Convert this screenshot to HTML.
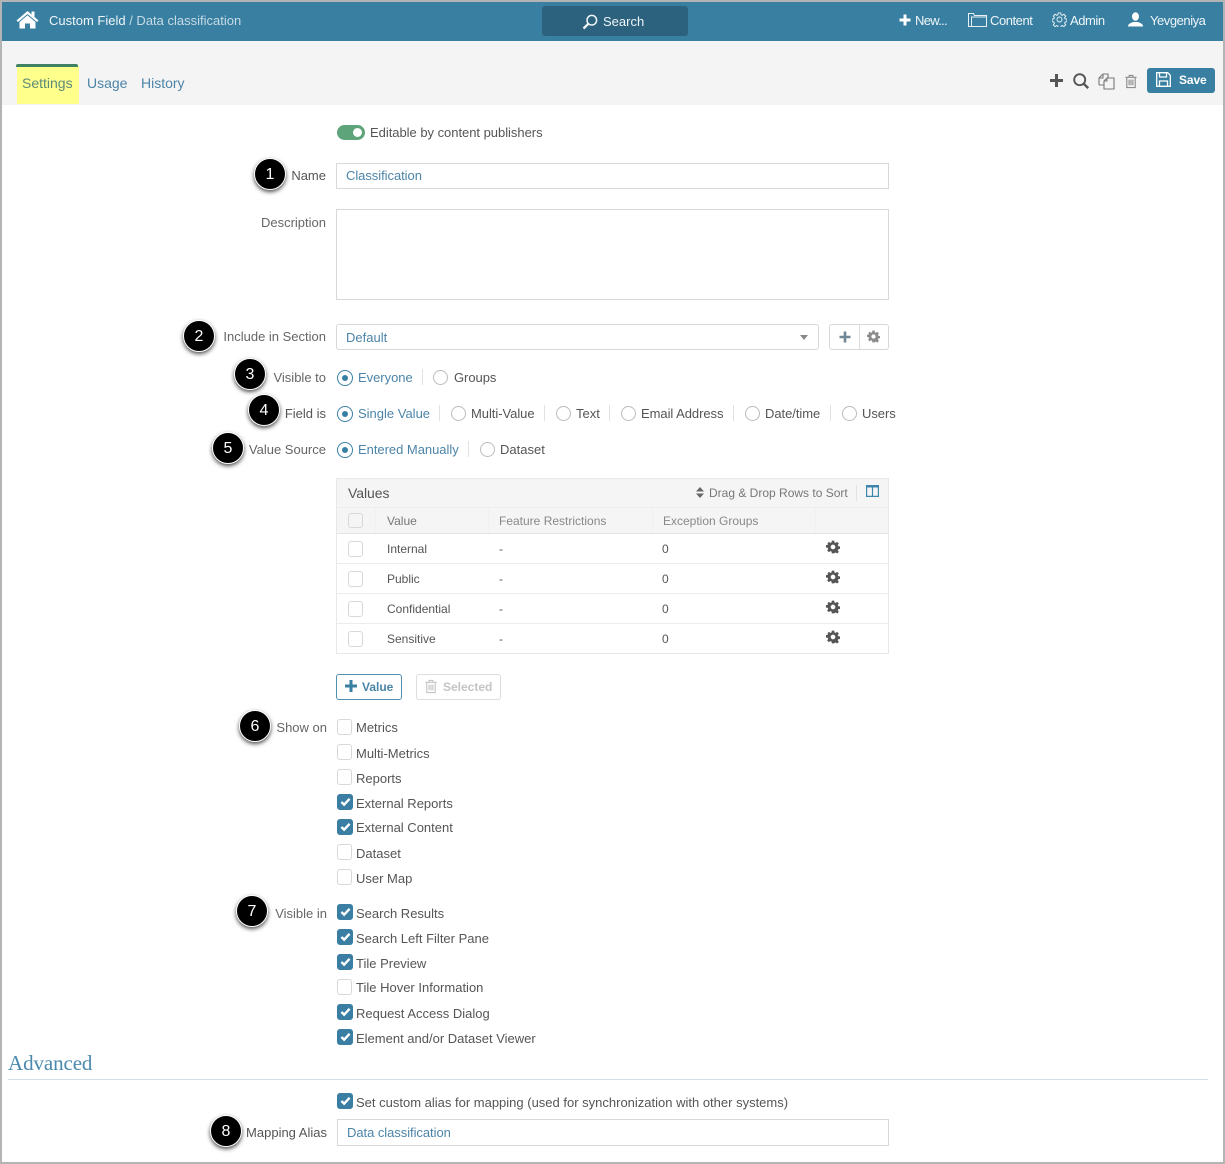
<!DOCTYPE html>
<html><head><meta charset="utf-8"><title>Custom Field</title>
<style>
*{box-sizing:border-box}
html,body{margin:0;padding:0;background:#fff}
#p{position:relative;width:1225px;height:1164px;overflow:hidden;background:#fff;font-family:"Liberation Sans",sans-serif;font-size:13px;color:#555}
.t{position:absolute;white-space:nowrap;line-height:16px;font-size:13px}
.r{text-align:right;right:898px}
.u{right:899px}
.b{color:#4c84a8}
.d{color:#555}
.g{color:#8a8a8a}
.bx{position:absolute;border:1px solid #d8d8d8;background:#fff}
.rad{position:absolute;width:15px;height:15px;border:1px solid #bbb;border-radius:50%;background:#fff}
.rad.on{width:16px;height:16px;border:1.5px solid #3a7fa3}
.rad.on:after{content:"";position:absolute;left:3.5px;top:3.5px;width:6px;height:6px;border-radius:50%;background:#3a7fa3}
.sep{position:absolute;width:1px;height:16px;background:#e2e2e2}
.cb{position:absolute;width:15px;height:16px;border:1px solid #d8d8d8;border-radius:3px;background:#fff}
.cb.on{width:16px;background:#3a7fa3;border-color:#3a7fa3}
.cb svg{position:absolute;left:1.500px;top:2px}
.n{position:absolute;width:32px;height:32px;border-radius:50%;background:#000;border:1.5px solid #fff;box-shadow:0 2px 4px rgba(0,0,0,.7);color:#fff;text-align:center;line-height:31px;font-size:16px}
.l{position:absolute;background:#ececec}
.f{background:#f0f0f0}
svg{position:absolute;display:block}
</style></head><body><div id="p">
<svg width="0" height="0"><defs>
<symbol id="gear" viewBox="0 0 24 24"><path fill-rule="evenodd" d="M10 1h4l.6 3.2 1.9.8L19.200 3.200l2.800 2.800-1.800 2.700.8 1.900 3 .6v4l-3 .6-.8 1.900 1.800 2.700-2.800 2.800-2.700-1.800-1.900.8L14 23h-4l-.6-3.200-1.900-.8-2.700 1.800L2 18l1.800-2.700-.8-1.900-3-.6v-4l3-.6.8-1.900L2 6l2.800-2.800L7.500 5l1.900-.8zM12 8a4 4 0 1 0 0 8 4 4 0 0 0 0-8z"/></symbol>
<symbol id="chk" viewBox="0 0 12 11"><path d="M1.500 5.500l3 3 6-6.500" fill="none" stroke="#fff" stroke-width="2.600"/></symbol>
<symbol id="trash" viewBox="0 0 14 16"><path d="M1 3.500h12M5 3V1.500h4V3M2.500 3.500v11h9v-11M5 6v6M7 6v6M9 6v6" fill="none" stroke="currentColor" stroke-width="1.200"/></symbol>
</defs></svg>

<!-- header -->
<div style="position:absolute;left:2px;top:2px;width:1221px;height:39px;background:#387fa1"></div>
<svg style="left:16px;top:10px" width="23" height="19" viewBox="0 0 23 19"><path d="M11.500 1L0.500 10.500l1.500 1.500 9.500-8 9.500 8 1.500-1.500-4-3.500V1.500h-3v3z" fill="#fff"/><path d="M3.500 12l8-6.700 8 6.700v6.500h-5.500v-5h-5v5H3.500z" fill="#fff"/></svg>
<div class="t" style="left:49px;top:13px;color:#f1f6f9">Custom Field <span style="color:#c6dbe6">/ Data classification</span></div>
<div style="position:absolute;left:542px;top:6px;width:146px;height:30px;background:#2c627d;border-radius:3px"></div>
<svg style="left:582px;top:14px" width="16" height="16" viewBox="0 0 16 16"><circle cx="9.800" cy="6.200" r="4.800" fill="none" stroke="#eef5f8" stroke-width="1.500"/><path d="M6.300 9.800L1.500 14.500" stroke="#eef5f8" stroke-width="2.300"/></svg>
<div class="t" style="left:603px;top:14px;color:#eef5f8">Search</div>
<svg style="left:899px;top:14px" width="12" height="12" viewBox="0 0 12 12"><path d="M6 0.500v11M0.500 6h11" stroke="#fff" stroke-width="3"/></svg>
<div class="t" style="left:915px;top:13px;color:#eef5f8;letter-spacing:-.7px">New...</div>
<svg style="left:968px;top:12px" width="19" height="16" viewBox="0 0 19 16"><path d="M.5 14.500V1.500h5l1 2h12v11zM3.500 14.500V5h15" fill="none" stroke="#e6f0f5" stroke-width="1"/></svg>
<div class="t" style="left:990px;top:13px;color:#eef5f8;letter-spacing:-.45px">Content</div>
<svg style="left:1052px;top:12px" width="15" height="15" viewBox="0 0 24 24"><path d="M10 1.500h4l.6 3 2 .8 2.500-1.700 2.800 2.800-1.700 2.500.8 2 3 .6v4l-3 .6-.8 2 1.700 2.500-2.800 2.800-2.500-1.700-2 .8-.6 3h-4l-.6-3-2-.8-2.500 1.700-2.800-2.800 1.700-2.500-.8-2-3-.6v-4l3-.6.8-2L2.100 6.400l2.800-2.800 2.500 1.700 2-.8z" fill="none" stroke="#eef5f8" stroke-width="1.500"/><circle cx="12" cy="12" r="4" fill="none" stroke="#eef5f8" stroke-width="1.500"/></svg>
<div class="t" style="left:1070px;top:13px;color:#eef5f8;letter-spacing:-.45px">Admin</div>
<svg style="left:1128px;top:12px" width="15" height="15" viewBox="0 0 15 15"><ellipse cx="7.500" cy="4.500" rx="3.500" ry="4.300" fill="#fff"/><path d="M0 14.500c0-3 3-3.500 5-4.500h5c2 1 5 1.500 5 4.500z" fill="#fff"/></svg>
<div class="t" style="left:1150px;top:13px;color:#eef5f8;letter-spacing:-.45px">Yevgeniya</div>

<!-- tabs band -->
<div style="position:absolute;left:2px;top:41px;width:1221px;height:64px;background:#f4f4f4"></div>
<div style="position:absolute;left:17px;top:66px;width:62px;height:38px;background:#ffff8c"></div>
<div style="position:absolute;left:16px;top:64px;width:62px;height:3px;background:#3d8263;border-radius:2px 2px 0 0"></div>
<div class="t" style="left:22px;top:75px;font-size:14px;color:#5d8a78">Settings</div>
<div class="t" style="left:87px;top:75px;font-size:14px;color:#4c84a8">Usage</div>
<div class="t" style="left:141px;top:75px;font-size:14px;color:#4c84a8">History</div>
<svg style="left:1050px;top:74px" width="13" height="13" viewBox="0 0 13 13"><path d="M6.500 0v13M0 6.500h13" stroke="#555" stroke-width="3"/></svg>
<svg style="left:1073px;top:73px" width="16" height="16" viewBox="0 0 16 16"><circle cx="6.700" cy="6.700" r="5.500" fill="none" stroke="#555" stroke-width="1.900"/><path d="M10.700 10.700l4.500 4.500" stroke="#555" stroke-width="2.400"/></svg>
<svg style="left:1098px;top:73px" width="17" height="17" viewBox="0 0 17 17"><path d="M1 12V5l4-4h5v4M5 1v4H1M1 12h5" fill="none" stroke="#777" stroke-width="1.100"/><path d="M6 16V8l3-3h7v11zM9 5v3H6" fill="none" stroke="#777" stroke-width="1.100"/></svg>
<svg style="left:1124px;top:74px;color:#8c8c8c" width="14" height="15"><use href="#trash"/></svg>
<div style="position:absolute;left:1147px;top:68px;width:68px;height:25px;background:#387fa1;border-radius:3px"></div>
<svg style="left:1156px;top:72px" width="15" height="15" viewBox="0 0 15 15"><path d="M.7.700h11l2.600 2.600v11H.7z" fill="none" stroke="#fff" stroke-width="1.300"/><path d="M3.500 1v4h7V1M3.500 14V9h8v5" fill="none" stroke="#fff" stroke-width="1.300"/></svg>
<div class="t" style="left:1179px;top:72px;color:#fff;font-weight:bold;font-size:12px;letter-spacing:-.1px">Save</div>

<!-- toggle -->
<div style="position:absolute;left:337px;top:125px;width:28px;height:15px;background:#5da47a;border-radius:8px"></div>
<div style="position:absolute;left:353px;top:128px;width:9px;height:9px;background:#fff;border-radius:50%"></div>
<div class="t" style="left:370px;top:125px;letter-spacing:-.03px">Editable by content publishers</div>

<!-- name -->
<div class="t r u" style="top:168px">Name</div>
<div class="bx" style="left:336px;top:163px;width:553px;height:26px"></div>
<div class="t b" style="left:346px;top:168px;letter-spacing:-.05px">Classification</div>
<div class="t r u" style="top:215px;color:#666">Description</div>
<div class="bx" style="left:336px;top:209px;width:553px;height:91px"></div>

<!-- section -->
<div class="t r u" style="top:329px;color:#666">Include in Section</div>
<div class="bx" style="left:336px;top:324px;width:483px;height:26px;border-radius:3px"></div>
<div class="t b" style="left:346px;top:330px">Default</div>
<div style="position:absolute;left:800px;top:335px;width:0;height:0;border-left:4.500px solid transparent;border-right:4.500px solid transparent;border-top:5px solid #888"></div>
<div class="bx" style="left:829px;top:324px;width:60px;height:26px;border-radius:3px"></div>
<div class="l" style="left:859px;top:325px;width:1px;height:24px;background:#ddd"></div>
<svg style="left:839px;top:331px" width="12" height="12" viewBox="0 0 12 12"><path d="M6 .5v11M.5 6h11" stroke="#6f8796" stroke-width="2.600"/></svg>
<svg style="left:867px;top:330px;fill:#8b8b8b" width="13" height="13"><use href="#gear"/></svg>

<!-- visible to -->
<div class="t r u" style="top:370px;color:#666">Visible to</div>
<div class="rad on" style="left:337px;top:370px"></div>
<div class="t b" style="left:358px;top:370px;letter-spacing:-.03px">Everyone</div>
<div class="sep" style="left:422px;top:369px"></div>
<div class="rad" style="left:433px;top:370px"></div>
<div class="t" style="left:454px;top:370px;letter-spacing:-.05px">Groups</div>

<!-- field is -->
<div class="t r u" style="top:406px;">Field is</div>
<div class="rad on" style="left:337px;top:406px"></div>
<div class="t b" style="left:358px;top:406px">Single Value</div>
<div class="sep" style="left:439px;top:405px"></div>
<div class="rad" style="left:451px;top:406px"></div>
<div class="t" style="left:471px;top:406px;letter-spacing:-.05px">Multi-Value</div>
<div class="sep" style="left:544px;top:405px"></div>
<div class="rad" style="left:556px;top:406px"></div>
<div class="t" style="left:576px;top:406px">Text</div>
<div class="sep" style="left:609px;top:405px"></div>
<div class="rad" style="left:621px;top:406px"></div>
<div class="t" style="left:641px;top:406px;letter-spacing:-.05px">Email Address</div>
<div class="sep" style="left:733px;top:405px"></div>
<div class="rad" style="left:745px;top:406px"></div>
<div class="t" style="left:765px;top:406px;letter-spacing:-.05px">Date/time</div>
<div class="sep" style="left:830px;top:405px"></div>
<div class="rad" style="left:842px;top:406px"></div>
<div class="t" style="left:862px;top:406px;letter-spacing:-.05px">Users</div>

<!-- value source -->
<div class="t r u" style="top:442px;color:#666">Value Source</div>
<div class="rad on" style="left:337px;top:442px"></div>
<div class="t b" style="left:358px;top:442px;letter-spacing:-.03px">Entered Manually</div>
<div class="sep" style="left:468px;top:441px"></div>
<div class="rad" style="left:480px;top:442px"></div>
<div class="t" style="left:500px;top:442px">Dataset</div>

<!-- table -->
<div style="position:absolute;left:336px;top:478px;width:553px;height:176px;border:1px solid #e8e8e8;background:#fff"></div>
<div style="position:absolute;left:337px;top:479px;width:551px;height:55px;background:#f5f5f5"></div>
<div class="l" style="left:337px;top:507px;width:551px;height:1px;background:#efefef"></div>
<div class="l" style="left:337px;top:533px;width:551px;height:1px;background:#e4e4e4"></div>
<div class="l" style="left:337px;top:563px;width:551px;height:1px"></div>
<div class="l" style="left:337px;top:593px;width:551px;height:1px"></div>
<div class="l" style="left:337px;top:623px;width:551px;height:1px"></div>
<div class="l f" style="left:375px;top:508px;width:1px;height:25px"></div>
<div class="l f" style="left:488px;top:508px;width:1px;height:25px"></div>
<div class="l f" style="left:652px;top:508px;width:1px;height:25px"></div>
<div class="l f" style="left:815px;top:508px;width:1px;height:25px"></div>
<div class="t" style="left:348px;top:485px;font-size:14px;color:#555;letter-spacing:-.05px">Values</div>
<svg style="left:695px;top:487px" width="10" height="11" viewBox="0 0 10 11"><path d="M5 0l4 4.500H1zM5 11l4-4.500H1z" fill="#666"/></svg>
<div class="t" style="left:709px;top:485px;font-size:12px;color:#777">Drag &amp; Drop Rows to Sort</div>
<div class="sep" style="left:856px;top:485px"></div>
<svg style="left:866px;top:485px" width="13" height="12" viewBox="0 0 13 12"><path d="M.6.600h11.800v10.800H.6zM6.500.6v10.800" fill="none" stroke="#3f86ad" stroke-width="1.200"/><path d="M0 0h13v2.500H0z" fill="#3f86ad"/></svg>

<div class="cb" style="left:348px;top:513px;height:15px;background:#f5f5f5"></div>
<div class="t" style="left:387px;top:513px;font-size:12px;color:#777">Value</div>
<div class="t" style="left:499px;top:513px;font-size:12px;color:#888">Feature Restrictions</div>
<div class="t" style="left:663px;top:513px;font-size:12px;color:#888">Exception Groups</div>

<div class="cb" style="left:348px;top:541px"></div>
<div class="t" style="left:387px;top:541px;font-size:12px">Internal</div>
<div class="t" style="left:499px;top:541px;font-size:12px">-</div>
<div class="t" style="left:662px;top:541px;font-size:12px">0</div>
<svg style="left:826px;top:540px;fill:#555" width="14" height="14"><use href="#gear"/></svg>

<div class="cb" style="left:348px;top:571px"></div>
<div class="t" style="left:387px;top:571px;font-size:12px">Public</div>
<div class="t" style="left:499px;top:571px;font-size:12px">-</div>
<div class="t" style="left:662px;top:571px;font-size:12px">0</div>
<svg style="left:826px;top:570px;fill:#555" width="14" height="14"><use href="#gear"/></svg>

<div class="cb" style="left:348px;top:601px"></div>
<div class="t" style="left:387px;top:601px;font-size:12px">Confidential</div>
<div class="t" style="left:499px;top:601px;font-size:12px">-</div>
<div class="t" style="left:662px;top:601px;font-size:12px">0</div>
<svg style="left:826px;top:600px;fill:#555" width="14" height="14"><use href="#gear"/></svg>

<div class="cb" style="left:348px;top:631px"></div>
<div class="t" style="left:387px;top:631px;font-size:12px">Sensitive</div>
<div class="t" style="left:499px;top:631px;font-size:12px">-</div>
<div class="t" style="left:662px;top:631px;font-size:12px">0</div>
<svg style="left:826px;top:630px;fill:#555" width="14" height="14"><use href="#gear"/></svg>

<!-- buttons -->
<div style="position:absolute;left:336px;top:674px;width:66px;height:26px;border:1px solid #4f8fb0;border-radius:3px;background:#fff"></div>
<svg style="left:345px;top:680px" width="12" height="12" viewBox="0 0 12 12"><path d="M6 0v12M0 6h12" stroke="#387fa1" stroke-width="3"/></svg>
<div class="t" style="left:362px;top:679px;font-size:12px;font-weight:bold;color:#4a86a8">Value</div>
<div style="position:absolute;left:416px;top:674px;width:85px;height:26px;border:1px solid #ddd;border-radius:3px;background:#fff"></div>
<svg style="left:424px;top:679px;color:#c4c4c4" width="14" height="15"><use href="#trash"/></svg>
<div class="t" style="left:443px;top:679px;font-size:12px;font-weight:bold;color:#c4c4c4">Selected</div>

<!-- show on -->
<div class="t r" style="top:720px;color:#666">Show on</div>
<div class="cb" style="left:337px;top:719px"></div><div class="t" style="left:356px;top:720px">Metrics</div>
<div class="cb" style="left:337px;top:744px"></div><div class="t" style="left:356px;top:746px">Multi-Metrics</div>
<div class="cb" style="left:337px;top:769px"></div><div class="t" style="left:356px;top:771px">Reports</div>
<div class="cb on" style="left:337px;top:794px"><svg width="11" height="10"><use href="#chk"/></svg></div><div class="t" style="left:356px;top:796px">External Reports</div>
<div class="cb on" style="left:337px;top:819px"><svg width="11" height="10"><use href="#chk"/></svg></div><div class="t" style="left:356px;top:820px">External Content</div>
<div class="cb" style="left:337px;top:844px"></div><div class="t" style="left:356px;top:846px">Dataset</div>
<div class="cb" style="left:337px;top:869px"></div><div class="t" style="left:356px;top:871px">User Map</div>

<!-- visible in -->
<div class="t r" style="top:906px;color:#666">Visible in</div>
<div class="cb on" style="left:337px;top:904px"><svg width="11" height="10"><use href="#chk"/></svg></div><div class="t" style="left:356px;top:906px">Search Results</div>
<div class="cb on" style="left:337px;top:929px"><svg width="11" height="10"><use href="#chk"/></svg></div><div class="t" style="left:356px;top:931px">Search Left Filter Pane</div>
<div class="cb on" style="left:337px;top:954px"><svg width="11" height="10"><use href="#chk"/></svg></div><div class="t" style="left:356px;top:956px">Tile Preview</div>
<div class="cb" style="left:337px;top:979px"></div><div class="t" style="left:356px;top:980px">Tile Hover Information</div>
<div class="cb on" style="left:337px;top:1004px"><svg width="11" height="10"><use href="#chk"/></svg></div><div class="t" style="left:356px;top:1006px">Request Access Dialog</div>
<div class="cb on" style="left:337px;top:1029px"><svg width="11" height="10"><use href="#chk"/></svg></div><div class="t" style="left:356px;top:1031px">Element and/or Dataset Viewer</div>

<!-- advanced -->
<div class="t" style="left:8px;top:1051px;font-family:'Liberation Serif',serif;font-size:21px;line-height:24px;color:#4a88ad;letter-spacing:-.1px">Advanced</div>
<div class="l" style="left:8px;top:1079px;width:1200px;height:1px;background:#cfdfe8"></div>
<div class="cb on" style="left:337px;top:1093px"><svg width="11" height="10"><use href="#chk"/></svg></div>
<div class="t" style="left:356px;top:1095px">Set custom alias for mapping (used for synchronization with other systems)</div>
<div class="t r" style="top:1125px">Mapping Alias</div>
<div class="bx" style="left:337px;top:1119px;width:552px;height:27px"></div>
<div class="t b" style="left:347px;top:1125px;letter-spacing:-.05px">Data classification</div>

<!-- callouts -->
<div class="n" style="left:254px;top:158px">1</div>
<div class="n" style="left:183px;top:320px">2</div>
<div class="n" style="left:234px;top:358px">3</div>
<div class="n" style="left:248px;top:394px">4</div>
<div class="n" style="left:212px;top:432px">5</div>
<div class="n" style="left:239px;top:710px">6</div>
<div class="n" style="left:236px;top:895px">7</div>
<div class="n" style="left:210px;top:1115px">8</div>

<!-- frame -->
<div style="position:absolute;left:0;top:0;width:1225px;height:1164px;border:2px solid #b4b4b4;pointer-events:none"></div>
</div></body></html>
